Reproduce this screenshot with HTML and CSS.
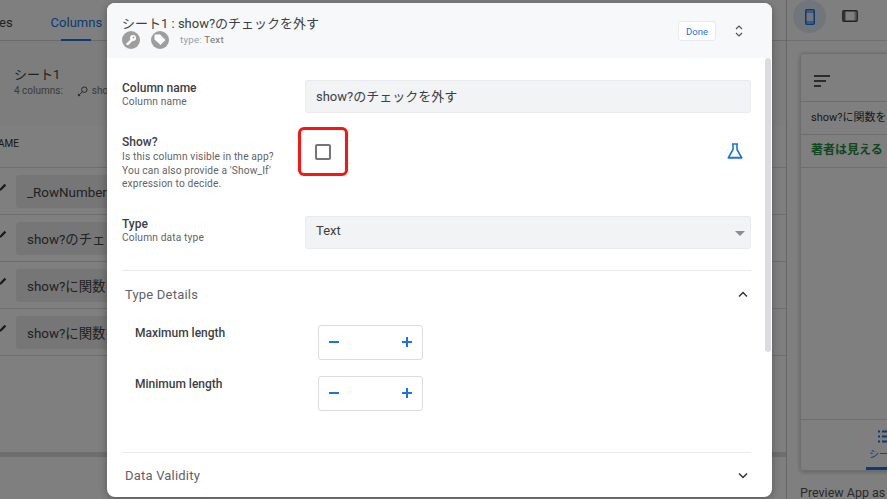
FILE: index.html
```html
<!DOCTYPE html>
<html lang="en">
<head>
    <meta charset="UTF-8">
    <title>Column settings</title>
    <link rel="stylesheet" href="styles.css">
</head>
<body>
    <div class="page">
        <div class="main">
            <div class="tabs">
                <span class="tab-cut">es</span>
                <span class="tab-active">Columns</span>
            </div>
            <div class="sheet">
                <div class="sheet-title">シート1</div>
                <div class="sheet-sub">
                    <span>4 columns:</span>
                    <svg class="sheet-key" viewBox="0 0 12 12"><circle cx="8" cy="4" r="3" fill="none" stroke="#444" stroke-width="1"/><path d="M6 6 L1.5 10.5 M1.5 10.5 L3.5 10.5 M1.5 10.5 L1.5 8.5" fill="none" stroke="#444" stroke-width="1"/></svg>
                    <span>show?</span>
                </div>
            </div>
            <div class="col-head">AME</div>
            <div class="col-row"><svg class="pencil" viewBox="0 0 10 10"><path d="M0 10 L1 7 L7 1 L9 3 L3 9 Z" fill="#333"/></svg><div class="cell">_RowNumber</div></div>
            <div class="col-row"><svg class="pencil" viewBox="0 0 10 10"><path d="M0 10 L1 7 L7 1 L9 3 L3 9 Z" fill="#333"/></svg><div class="cell">show?のチェックを外す</div></div>
            <div class="col-row"><svg class="pencil" viewBox="0 0 10 10"><path d="M0 10 L1 7 L7 1 L9 3 L3 9 Z" fill="#333"/></svg><div class="cell">show?に関数を入れる</div></div>
            <div class="col-row"><svg class="pencil" viewBox="0 0 10 10"><path d="M0 10 L1 7 L7 1 L9 3 L3 9 Z" fill="#333"/></svg><div class="cell">show?に関数を入れる</div></div>
            <div class="hscroll"></div>
        </div>
        <div class="preview">
            <div class="device-bar">
                <div class="device-on">
                    <svg width="10" height="16" viewBox="0 0 10 16"><rect x="0.75" y="0.75" width="8.5" height="14.5" rx="1" fill="none" stroke="#1a73e8" stroke-width="1.5"/><path d="M1 3 H9 M1 13 H9" stroke="#1a73e8" stroke-width="1"/></svg>
                </div>
                <svg class="device-off" width="16" height="12" viewBox="0 0 16 12"><rect x="0.75" y="0.75" width="14.5" height="10.5" rx="1" fill="none" stroke="#444" stroke-width="1.3"/><rect x="1" y="1" width="2.5" height="10" fill="#666"/><rect x="12.5" y="1" width="2.5" height="10" fill="#666" opacity=".5"/></svg>
            </div>
            <div class="phone">
                <div class="phone-top">
                    <svg width="16" height="12" viewBox="0 0 16 12"><path d="M0 1 H16 M0 6 H12 M0 11 H7" stroke="#222" stroke-width="1.6"/></svg>
                </div>
                <div class="phone-row">show?に関数を入れる</div>
                <div class="phone-row phone-green">著者は見える</div>
                <div class="phone-fill"></div>
                <div class="phone-nav">
                    <svg class="nav-icon" width="14" height="13" viewBox="0 0 14 13"><path d="M0 1.5 H2 M0 6.5 H2 M0 11.5 H2 M4 1.5 H14 M4 6.5 H14 M4 11.5 H14" stroke="#1a73e8" stroke-width="2"/></svg>
                    <span class="nav-label">シート1</span>
                </div>
            </div>
            <div class="preview-as">Preview App as Guest</div>
        </div>
    </div>

    <div class="overlay"></div>

    <div class="dialog">
        <div class="dialog-head">
            <div class="head-text">
                <div class="head-title">シート1 : show?のチェックを外す</div>
                <div class="head-meta">
                    <span class="badge">
                        <svg width="12" height="12" viewBox="0 0 12 12"><circle cx="8" cy="4" r="3" fill="#fff"/><path d="M6 5 L1.5 9.5 V11 H3.5 L7.5 7 Z" fill="#fff"/><circle cx="8.5" cy="3.5" r="0.9" fill="#9e9e9e"/></svg>
                    </span>
                    <span class="badge">
                        <svg width="12" height="12" viewBox="0 0 12 12"><path d="M0.5 1.5 Q0.5 0.5 1.5 0.5 H6 L11.5 6 L6.5 11 L0.5 5.5 Z" fill="#fff"/></svg>
                    </span>
                    <span class="type-note"><span class="type-key">type:</span> Text</span>
                </div>
            </div>
            <button class="done">Done</button>
            <svg class="updown" width="8" height="12" viewBox="0 0 8 12"><path d="M1 4 L4 1 L7 4 M1 8 L4 11 L7 8" fill="none" stroke="#555" stroke-width="1.2"/></svg>
        </div>
        <div class="dialog-body">
            <div class="scrollbar"></div>
            <div class="form">
                <div class="field field-name">
                    <div class="label">
                        <div class="label-main">Column name</div>
                        <div class="label-sub">Column name</div>
                    </div>
                    <div class="text-box">show?のチェックを外す</div>
                </div>
                <div class="field field-show">
                    <div class="label">
                        <div class="label-main">Show?</div>
                        <div class="label-sub">Is this column visible in the app?<br>You can also provide a 'Show_If'<br>expression to decide.</div>
                    </div>
                    <div class="check-wrap">
                        <div class="check"></div>
                    </div>
                    <svg class="flask" width="16" height="16" viewBox="0 0 16 16"><path d="M5 1 H11 M6 1 V6.5 L1.5 14.5 H14.5 L10 6.5 V1 M1 15 H15" fill="none" stroke="#1a73e8" stroke-width="1.6"/></svg>
                </div>
                <div class="field field-type">
                    <div class="label">
                        <div class="label-main">Type</div>
                        <div class="label-sub">Column data type</div>
                    </div>
                    <div class="select-box">Text<span class="caret"></span></div>
                </div>
                <div class="section section-open">
                    <div class="section-head">
                        <span>Type Details</span>
                        <svg width="10" height="7" viewBox="0 0 10 7"><path d="M1 5.5 L5 1.5 L9 5.5" fill="none" stroke="#333" stroke-width="1.5"/></svg>
                    </div>
                    <div class="detail">
                        <div class="detail-label">Maximum length</div>
                        <div class="stepper"><span class="minus"></span><span class="plus"></span></div>
                    </div>
                    <div class="detail">
                        <div class="detail-label">Minimum length</div>
                        <div class="stepper"><span class="minus"></span><span class="plus"></span></div>
                    </div>
                </div>
                <div class="section section-closed">
                    <div class="section-head">
                        <span>Data Validity</span>
                        <svg width="10" height="7" viewBox="0 0 10 7"><path d="M1 1.5 L5 5.5 L9 1.5" fill="none" stroke="#333" stroke-width="1.5"/></svg>
                    </div>
                </div>
            </div>
        </div>
    </div>
</body>
</html>
```

FILE: styles.css
```css
html, body {
    margin: 0;
    height: 100%;
    overflow: hidden;
}
body {
    font-family: 'Roboto', 'Noto Sans CJK JP', sans-serif;
    color: #3c4043;
    background: #fff;
}
.page {
    display: flex;
    width: 887px;
    height: 499px;
    overflow: hidden;
}

/* page behind the dialog */
.main {
    width: 786px;
    border-right: 1px solid #ccc;
    flex-shrink: 0;
    position: relative;
}
.tabs {
    height: 40px;
    display: flex;
    border-bottom: 1px solid #d5d5d5;
    font-size: 13px;
    box-shadow: 0 10px 0 -9px #ddd;
}
.tab-cut {
    margin-left: -1px;
    padding-top: 15px;
    color: #444;
}
.tab-active {
    margin-left: 38px;
    padding-top: 15px;
    color: #1a73e8;
    position: relative;
}
.tab-active::after {
    content: "";
    position: absolute;
    left: 10px;
    bottom: -1px;
    width: 30px;
    height: 2px;
    background: #1a73e8;
}
.sheet {
    padding: 25px 0 0 14px;
    height: 85px;
    box-sizing: border-box;
    background: #fafafa;
}
.sheet-title {
    font-size: 13px;
    line-height: 18px;
    color: #444;
}
.sheet-sub {
    display: flex;
    align-items: center;
    gap: 4px;
    font-size: 10px;
    line-height: 14px;
    color: #777;
}
.sheet-key {
    width: 11px;
    height: 11px;
    margin-left: 10px;
}
.col-head {
    height: 42px;
    line-height: 36px;
    box-sizing: border-box;
    border-bottom: 1px solid #ddd;
    font-size: 10px;
    color: #333;
    text-indent: -2px;
}
.col-row {
    height: 47px;
    box-sizing: border-box;
    display: flex;
    align-items: center;
    border-bottom: 1px solid #ddd;
    padding-left: 16px;
    position: relative;
}
.pencil {
    position: absolute;
    left: -1px;
    top: 15px;
    width: 8px;
    height: 8px;
}
.cell {
    width: 300px;
    height: 33px;
    line-height: 35px;
    padding-left: 11px;
    background: #ececec;
    border-radius: 3px;
    font-size: 13.4px;
    color: #444;
}
.hscroll {
    position: absolute;
    left: 0;
    right: 0;
    top: 452px;
    height: 5px;
    background: #ddd;
    box-shadow: 0 21px 0 -20px #ccc;
}

/* preview column */
.preview {
    flex: 1;
    min-width: 0;
    background: #fff;
}
.device-bar {
    height: 40px;
    display: flex;
    align-items: flex-start;
    gap: 16px;
    padding-left: 6px;
    border-bottom: 1px solid #ddd;
}
.device-on {
    width: 33px;
    height: 33px;
    border-radius: 50%;
    background: #e3ecf9;
    display: flex;
    align-items: center;
    justify-content: center;
}
.device-off {
    margin-top: 10px;
}
.phone {
    margin: 12px 0 0 13px;
    width: 200px;
    height: 418px;
    box-sizing: border-box;
    border: 1px solid #ddd;
    border-radius: 4px;
    box-shadow: 0 1px 4px rgba(0, 0, 0, 0.25);
    display: flex;
    flex-direction: column;
}
.phone-top {
    height: 48px;
    box-sizing: border-box;
    padding: 18px 0 0 13px;
    border-bottom: 1px solid #ddd;
}
.phone-row {
    height: 33px;
    line-height: 31px;
    box-sizing: border-box;
    padding-left: 10px;
    font-size: 11px;
    color: #333;
    border-bottom: 1px solid #ddd;
    white-space: nowrap;
}
.phone-green {
    color: #1e8e3e;
    font-size: 12px;
    font-weight: 700;
}
.phone-fill {
    flex: 1;
}
.phone-nav {
    height: 51px;
    border-top: 1px solid #ddd;
    box-sizing: border-box;
    padding: 10px 0 0 77px;
    position: relative;
}
.phone-nav::after {
    content: "";
    position: absolute;
    left: 65px;
    bottom: 0;
    width: 60px;
    height: 3px;
    background: #1a73e8;
}
.nav-icon {
    display: block;
}
.nav-label {
    display: block;
    margin: 3px 0 0 -9px;
    font-size: 10px;
    color: #1a73e8;
    white-space: nowrap;
}
.preview-as {
    margin: 14px 0 0 13px;
    font-size: 12.5px;
    color: #555;
    white-space: nowrap;
}

.overlay {
    position: absolute;
    inset: 0;
    background: rgba(0, 0, 0, 0.5);
}

/* dialog */
.dialog {
    position: absolute;
    left: 107px;
    top: 3px;
    width: 665px;
    height: 494px;
    background: #fff;
    border-radius: 8px;
    overflow: hidden;
    box-shadow: 0 2px 8px rgba(0, 0, 0, 0.3);
    display: flex;
    flex-direction: column;
}
.dialog-head {
    height: 55px;
    flex-shrink: 0;
    box-sizing: border-box;
    background: #f7f8fa;
    display: flex;
    align-items: flex-start;
    padding: 13px 29px 0 15px;
}
.head-text {
    flex: 1;
}
.head-title {
    font-size: 13px;
    line-height: 15px;
    color: #3c4043;
}
.head-meta {
    display: flex;
    align-items: center;
    gap: 11px;
}
.badge {
    width: 18px;
    height: 18px;
    border-radius: 50%;
    background: #9e9e9e;
    display: flex;
    align-items: center;
    justify-content: center;
}
.type-note {
    font-size: 9.8px;
    padding-bottom: 2px;
    color: #70757a;
    letter-spacing: 0.2px;
}
.type-key {
    color: #9aa0a6;
}
.done {
    margin-top: 5px;
    width: 38px;
    height: 20px;
    padding: 0;
    border: 1px solid #e8eaed;
    border-radius: 3px;
    background: #fff;
    color: #1a73e8;
    font-family: inherit;
    font-size: 9.5px;
    font-weight: 400;
}
.updown {
    margin: 9px 0 0 19px;
}
.dialog-body {
    flex: 1;
    position: relative;
    overflow: hidden;
}
.scrollbar {
    position: absolute;
    right: 1px;
    top: 0;
    width: 6px;
    height: 294px;
    border-radius: 3px;
    background: #dadce0;
}
.form {
    padding: 22px 21px 0 15px;
}
.field {
    display: flex;
    align-items: flex-start;
}
.field-name {
    height: 47px;
}
.field-show {
    height: 89px;
    position: relative;
}
.field-show .label {
    padding-top: 7px;
}
.field-show .label-sub {
    margin-top: 1px;
}
.field-type {
    height: 54px;
    border-bottom: 1px solid #e8eaed;
}
.label {
    width: 183px;
    flex-shrink: 0;
}
.label-main {
    font-size: 12px;
    font-weight: 500;
    line-height: 14px;
    color: #3c4043;
    padding-top: 1px;
}
.label-sub {
    font-size: 10.2px;
    line-height: 13.5px;
    color: #5f6368;
    letter-spacing: 0.15px;
}
.text-box, .select-box {
    flex: 1;
    height: 33px;
    box-sizing: border-box;
    background: #f1f3f4;
    border: 1px solid #e8eaed;
    border-radius: 3px;
    padding-left: 10px;
    line-height: 32px;
    font-size: 13px;
    color: #3c4043;
}
.select-box {
    position: relative;
    line-height: 28px;
}
.caret {
    position: absolute;
    right: 5px;
    top: 14px;
    border-left: 5px solid transparent;
    border-right: 5px solid transparent;
    border-top: 5px solid #8a8d91;
}
.check-wrap {
    margin-left: -7px;
    width: 50px;
    height: 49px;
    box-sizing: border-box;
    border: 3px solid #fb1414;
    border-radius: 6px;
    display: flex;
    align-items: center;
    justify-content: center;
}
.check {
    width: 16px;
    height: 16px;
    box-sizing: border-box;
    border: 2px solid #757575;
    border-radius: 2px;
}
.flask {
    position: absolute;
    left: 605px;
    top: 16px;
}
.section-head {
    display: flex;
    align-items: center;
    justify-content: space-between;
    height: 47px;
    padding: 0 3px;
    font-size: 13px;
    color: #5f6368;
    letter-spacing: 0.2px;
}
.section-closed .section-head {
    height: 44px;
}
.section-open {
    height: 181px;
    border-bottom: 1px solid #e8eaed;
}
.detail {
    display: flex;
    align-items: flex-start;
    padding-left: 13px;
    margin-top: 7px;
    margin-bottom: 16px;
}
.detail-label {
    width: 183px;
    font-size: 12px;
    font-weight: 500;
    line-height: 14px;
    color: #3c4043;
    padding-top: 1px;
}
.stepper {
    width: 105px;
    height: 35px;
    box-sizing: border-box;
    border: 1px solid #dadce0;
    border-radius: 3px;
    position: relative;
}
.minus, .plus {
    position: absolute;
    top: 15px;
    width: 10px;
    height: 2px;
    background: #1a73e8;
}
.minus {
    left: 10px;
}
.plus {
    right: 10px;
}
.plus::after {
    content: "";
    position: absolute;
    left: 4px;
    top: -4px;
    width: 2px;
    height: 10px;
    background: #1a73e8;
}
```
